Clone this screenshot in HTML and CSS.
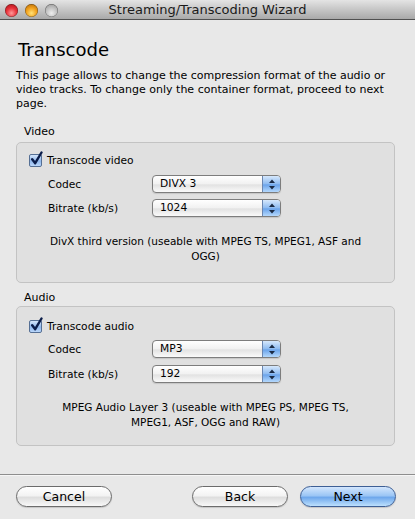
FILE: index.html
```html
<!DOCTYPE html>
<html>
<head>
<meta charset="utf-8">
<link rel="stylesheet" href="styles.css">
</head>
<body>
<div class="window">
  <div class="titlebar">
    <div class="lights">
      <span class="light red"></span>
      <span class="light orange"></span>
      <span class="light gray"></span>
    </div>
    <div class="title">Streaming/Transcoding Wizard</div>
  </div>
  <div class="content">
    <h1 class="heading">Transcode</h1>
    <p class="intro">This page allows to change the compression format of the audio or<br>video tracks. To change only the container format, proceed to next<br>page.</p>

    <div class="group-label">Video</div>
    <div class="group">
      <label class="check-row">
        <span class="checkbox"><svg width="16" height="16" viewBox="0 0 16 16"><path d="M3.2 8.2 L6.2 12.2 L12.5 1.5" fill="none" stroke="#0b1d4a" stroke-width="2.4" stroke-linecap="round" stroke-linejoin="round"/></svg></span>
        <span>Transcode video</span>
      </label>
      <div class="field-row">
        <span class="field-label">Codec</span>
        <div class="popup"><span class="popup-value">DIVX 3</span><span class="popup-arrows"><svg width="8" height="11" viewBox="0 0 8 11"><path d="M4 0.5 L7 4 L1 4 Z" fill="#1a2a44"/><path d="M4 10.5 L7 7 L1 7 Z" fill="#1a2a44"/></svg></span></div>
      </div>
      <div class="field-row">
        <span class="field-label">Bitrate (kb/s)</span>
        <div class="popup"><span class="popup-value">1024</span><span class="popup-arrows"><svg width="8" height="11" viewBox="0 0 8 11"><path d="M4 0.5 L7 4 L1 4 Z" fill="#1a2a44"/><path d="M4 10.5 L7 7 L1 7 Z" fill="#1a2a44"/></svg></span></div>
      </div>
      <p class="desc">DivX third version (useable with MPEG TS, MPEG1, ASF and<br>OGG)</p>
    </div>

    <div class="group-label audio-label">Audio</div>
    <div class="group audio-group">
      <label class="check-row">
        <span class="checkbox"><svg width="16" height="16" viewBox="0 0 16 16"><path d="M3.2 8.2 L6.2 12.2 L12.5 1.5" fill="none" stroke="#0b1d4a" stroke-width="2.4" stroke-linecap="round" stroke-linejoin="round"/></svg></span>
        <span>Transcode audio</span>
      </label>
      <div class="field-row">
        <span class="field-label">Codec</span>
        <div class="popup"><span class="popup-value">MP3</span><span class="popup-arrows"><svg width="8" height="11" viewBox="0 0 8 11"><path d="M4 0.5 L7 4 L1 4 Z" fill="#1a2a44"/><path d="M4 10.5 L7 7 L1 7 Z" fill="#1a2a44"/></svg></span></div>
      </div>
      <div class="field-row">
        <span class="field-label">Bitrate (kb/s)</span>
        <div class="popup"><span class="popup-value">192</span><span class="popup-arrows"><svg width="8" height="11" viewBox="0 0 8 11"><path d="M4 0.5 L7 4 L1 4 Z" fill="#1a2a44"/><path d="M4 10.5 L7 7 L1 7 Z" fill="#1a2a44"/></svg></span></div>
      </div>
      <p class="desc">MPEG Audio Layer 3 (useable with MPEG PS, MPEG TS,<br>MPEG1, ASF, OGG and RAW)</p>
    </div>
  </div>
  <div class="footer">
    <button class="btn cancel">Cancel</button>
    <div class="spacer"></div>
    <button class="btn back">Back</button>
    <button class="btn next">Next</button>
  </div>
</div>
</body>
</html>
```

FILE: styles.css
```css
* { box-sizing: border-box; }
html, body { margin: 0; padding: 0; }
body {
  width: 415px;
  height: 519px;
  overflow: hidden;
  background: #e8e8e8;
  font-family: "Lucida Grande", "DejaVu Sans", sans-serif;
  font-size: 12px;
  color: #000;
}
.window { width: 415px; height: 519px; display: flex; flex-direction: column; }
.titlebar {
  height: 20px;
  flex: none;
  display: flex;
  align-items: center;
  position: relative;
  background: linear-gradient(#e4e4e4, #c6c6c6 50%, #a9a9a9);
  border-bottom: 1px solid #505050;
}
.lights { display: flex; gap: 7px; padding-left: 5px; padding-top: 1px; }
.light {
  width: 13px; height: 13px; border-radius: 50%;
  box-shadow: inset 0 0 0 0.5px rgba(0,0,0,0.45);
}
.light.red { background: radial-gradient(circle at 50% 70%, #ff9a9a 0%, #e8323a 45%, #9a0a10 100%); }
.light.orange { background: radial-gradient(circle at 50% 70%, #ffe27a 0%, #f2a21e 45%, #a55c00 100%); }
.light.gray { background: radial-gradient(circle at 50% 70%, #eeeeee 0%, #c4c4c4 45%, #8e8e8e 100%); }
.title {
  position: absolute; left: 0; right: 0; top: 0; bottom: 0;
  text-align: center; line-height: 19px; font-size: 13px; color: #1a1a1a;
  pointer-events: none;
}
.content { padding: 18px 20px 0 16px; flex: none; }
.heading {
  margin: 0 0 0 2px; font-size: 18px; font-weight: normal; line-height: 24px; height: 24px;
}
.intro { margin: 7px 0 0 0; line-height: 14px; font-size: 11px; white-space: nowrap; }
.group-label { margin: 14px 0 0 8px; line-height: 14px; font-size: 11px; }
.audio-label { margin-top: 8px; }
.group {
  margin-top: 3px;
  height: 141px;
  border: 1px solid #c3c3c3;
  border-radius: 5px;
  background: #e0e0e0;
  padding: 10px 12px 0 12px;
  font-size: 10.7px;
}
.audio-group { margin-top: 1px; height: 140px; padding-top: 12px; }
.check-row { display: flex; align-items: center; height: 14px; gap: 5px; }
.checkbox {
  width: 13px; height: 13px; flex: none; position: relative;
  border: 1px solid #556f94;
  border-radius: 2px;
  background: linear-gradient(#d5e6fb, #8fb7ec 55%, #b9d6fa);
}
.checkbox svg { position: absolute; left: -1px; top: -4px; }
.field-row {
  display: grid; grid-template-columns: 104px 129px; align-items: center;
  height: 18px; margin-top: 8px; padding-left: 19px;
}
.field-row + .field-row { margin-top: 6px; }
.audio-group .field-row { margin-top: 7px; }
.popup {
  height: 18px; display: flex;
  border: 1px solid #7d7d7d; border-radius: 4px;
  background: linear-gradient(#ffffff, #f1f1f1 50%, #e2e2e2 55%, #fafafa);
  overflow: hidden;
  box-shadow: 0 1px 1px rgba(0,0,0,0.12);
}
.popup-value { flex: 1; padding-left: 7px; line-height: 16px; }
.popup-arrows {
  width: 18px; flex: none; display: flex; align-items: center; justify-content: center;
  border-left: 1px solid #6a86b0;
  background: linear-gradient(#d6e8fc, #8cbaf0 50%, #6aa3ea 55%, #b4d8fc);
}
.desc { margin: 17px 0 0 0; text-align: center; line-height: 15px; white-space: nowrap; font-size: 10.5px; }
.footer {
  margin-top: 28px;
  border-top: 1px solid #8e8e8e;
  box-shadow: inset 0 1px 0 #f6f6f6;
  display: flex; align-items: flex-start;
  padding: 11px 19px 0 16px;
  flex: 1;
}
.spacer { flex: 1; }
.btn {
  font-family: inherit; font-size: 12.5px; color: #000;
  height: 21px; width: 96px; padding: 0; margin: 0;
  border: 1px solid #6c6c6c; border-radius: 11px;
  background: linear-gradient(#ffffff, #f3f3f3 45%, #dedede 55%, #f8f8f8);
  box-shadow: 0 1px 1px rgba(0,0,0,0.15);
}
.back { margin-right: 12px; }
.next {
  border-color: #3e5f95;
  background: linear-gradient(#d3e6fd, #9cc6f5 45%, #6fa8ec 55%, #bde0fd);
}
```
